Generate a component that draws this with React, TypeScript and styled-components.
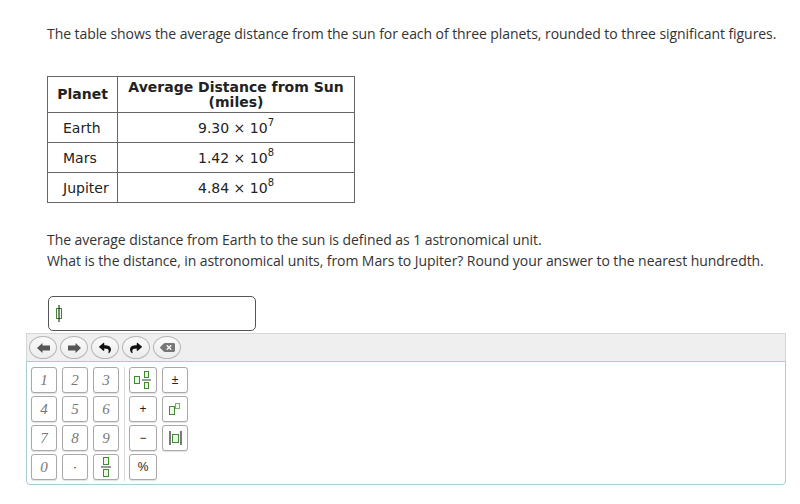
import * as React from 'react'
import styled, { createGlobalStyle } from 'styled-components'
import { FaReply, FaShare, FaBackspace } from 'react-icons/fa'

const GlobalStyle = createGlobalStyle`
    html, body {
        margin: 0;
        padding: 0;
        background: #fff;
    }
    body {
        font-family: "Open Sans", "Liberation Sans", sans-serif;
        color: #333;
    }
`;

const Page = styled.div`
    width: 800px;
    height: 504px;
    padding: 23px 0 0 26px;
    box-sizing: border-box;
    overflow: hidden;
`;

const Text = styled.p<{ $top: number }>`
    margin: ${p => p.$top}px 0 0 21px;
    font-size: 14px;
    line-height: 21px;
    color: #333;
    letter-spacing: -0.07px;
`;

const Table = styled.table`
    margin: 32px 0 0 21px;
    border-collapse: collapse;
    font-family: "DejaVu Sans", Verdana, sans-serif;
    font-size: 14px;
    color: #222;
    border: 1px solid #666;
`;

const Th = styled.th<{ $w: number }>`
    width: ${p => p.$w}px;
    height: 36px;
    padding: 0 4px;
    box-sizing: border-box;
    border: 1px solid #666;
    font-weight: bold;
    line-height: 15px;
    text-align: center;
`;

const Td = styled.td<{ $align?: 'left' | 'center' }>`
    height: 29px;
    padding: ${p => p.$align === 'left' ? '0 2px 0 15px' : '0 2px'};
    border: 1px solid #666;
    text-align: ${p => p.$align ?? 'center'};
    line-height: 16px;

    sup {
        font-size: 10px;
        line-height: 0;
        vertical-align: 7px;
    }
`;

const Answer = styled.div`
    margin: 25px 0 0 22px;
    width: 208px;
    height: 35px;
    box-sizing: border-box;
    border: 1px solid #555;
    border-radius: 5px;
    display: flex;
    align-items: center;
    padding-left: 6px;
`;

const Keypad = styled.div`
    margin-top: 2px;
    width: 760px;
`;

const Toolbar = styled.div`
    height: 28px;
    box-sizing: border-box;
    background: #efefef;
    border: 1px solid #d6d6d6;
    border-bottom: none;
    display: flex;
    align-items: center;
    gap: 3px;
    padding-left: 2px;
`;

const RoundButton = styled.div<{ $color: string }>`
    width: 28px;
    height: 23px;
    box-sizing: border-box;
    border: 1px solid #b4b4b4;
    border-radius: 50%;
    background: linear-gradient(#fbfbfb, #ececec);
    display: flex;
    align-items: center;
    justify-content: center;
    color: ${p => p.$color};
    font-size: 12px;
`;

const Panel = styled.div`
    height: 124px;
    box-sizing: border-box;
    border: 1px solid #a8cdd5;
    border-radius: 0 0 4px 4px;
    padding: 5px 0 0 4px;
    display: flex;
`;

const KeyGrid = styled.div<{ $cols: string }>`
    display: grid;
    grid-template-columns: ${p => p.$cols};
    grid-auto-rows: 26px;
    column-gap: 5px;
    row-gap: 3px;
`;

const Divider = styled.div`
    width: 1px;
    height: 114px;
    margin: 0 4px 0 5px;
    background: #d8d8d8;
`;

const Key = styled.div<{ $kind?: 'digit' | 'op' | 'icon' }>`
    box-sizing: border-box;
    border: 1px solid #a9a9a9;
    border-radius: 3px;
    background: #fff;
    box-shadow: 0 1px 1px rgba(0, 0, 0, 0.12);
    display: flex;
    align-items: center;
    justify-content: center;
    font-family: ${p => p.$kind === 'digit' ? '"Liberation Serif", serif' : '"Liberation Sans", sans-serif'};
    font-style: ${p => p.$kind === 'digit' ? 'italic' : 'normal'};
    font-size: ${p => p.$kind === 'digit' ? '15px' : '12px'};
    color: ${p => p.$kind === 'digit' ? '#777' : '#222'};
`;

const Empty = styled.div``;

const G = '#3f8a2f';
const GF = '#eef7ea';

const BlockArrow = ({ flip }: { flip?: boolean }) => (
    <svg width="13" height="10" viewBox="0 0 13 10" style={flip ? { transform: 'scaleX(-1)' } : undefined}>
        <path d="M0 5 L5.5 0 L5.5 2.6 L13 2.6 L13 7.4 L5.5 7.4 L5.5 10 Z" fill="currentColor" />
    </svg>
);

const Cursor = () => (
    <svg width="8" height="18" viewBox="0 0 8 18">
        <rect x="1.5" y="3.5" width="5" height="10" fill={GF} stroke={G} />
        <line x1="4" y1="0" x2="4" y2="17" stroke="#111" strokeWidth="1" />
    </svg>
);

const MixedIcon = () => (
    <svg width="20" height="18" viewBox="0 0 20 18">
        <rect x="1.5" y="5.5" width="5" height="7" fill={GF} stroke={G} />
        <rect x="11.5" y="0.5" width="4" height="6" fill={GF} stroke={G} />
        <line x1="9" y1="9" x2="18" y2="9" stroke="#333" />
        <rect x="11.5" y="11.5" width="4" height="6" fill={GF} stroke={G} />
    </svg>
);

const FracIcon = () => (
    <svg width="12" height="20" viewBox="0 0 12 20">
        <rect x="3.5" y="0.5" width="5" height="7" fill={GF} stroke={G} />
        <line x1="1" y1="10" x2="11" y2="10" stroke="#333" />
        <rect x="3.5" y="12.5" width="5" height="7" fill={GF} stroke={G} />
    </svg>
);

const PowIcon = () => (
    <svg width="12" height="12" viewBox="0 0 12 12">
        <rect x="0.5" y="3.5" width="5" height="8" fill={GF} stroke={G} />
        <rect x="6.5" y="0.5" width="4" height="5" fill={GF} stroke="#7fae74" />
    </svg>
);

const AbsIcon = () => (
    <svg width="13" height="14" viewBox="0 0 13 14">
        <line x1="1" y1="0" x2="1" y2="14" stroke="#222" strokeWidth="1.2" />
        <rect x="3.5" y="3.5" width="6" height="8" fill={GF} stroke={G} />
        <line x1="12" y1="0" x2="12" y2="14" stroke="#222" strokeWidth="1.2" />
    </svg>
);

const rows = [
    { planet: 'Earth', base: '9.30', exp: '7' },
    { planet: 'Mars', base: '1.42', exp: '8' },
    { planet: 'Jupiter', base: '4.84', exp: '8' },
];

export default function App() {
    return (
        <Page>
            <GlobalStyle />
            <Text $top={0}>
                The table shows the average distance from the sun for each of three planets, rounded to three significant figures.
            </Text>

            <Table>
                <thead>
                    <tr>
                        <Th $w={70}>Planet</Th>
                        <Th $w={237}>Average Distance from Sun<br />(miles)</Th>
                    </tr>
                </thead>
                <tbody>
                    {rows.map(r => (
                        <tr key={r.planet}>
                            <Td $align="left">{r.planet}</Td>
                            <Td>{r.base} × 10<sup>{r.exp}</sup></Td>
                        </tr>
                    ))}
                </tbody>
            </Table>

            <Text $top={26}>
                The average distance from Earth to the sun is defined as 1 astronomical unit.<br />
                What is the distance, in astronomical units, from Mars to Jupiter? Round your answer to the nearest hundredth.
            </Text>

            <Answer>
                <Cursor />
            </Answer>

            <Keypad>
                <Toolbar>
                    <RoundButton $color="#555"><BlockArrow /></RoundButton>
                    <RoundButton $color="#555"><BlockArrow flip /></RoundButton>
                    <RoundButton $color="#111"><FaReply /></RoundButton>
                    <RoundButton $color="#111"><FaShare /></RoundButton>
                    <RoundButton $color="#777"><FaBackspace size={15} /></RoundButton>
                </Toolbar>
                <Panel>
                    <KeyGrid $cols="26px 26px 26px">
                        {['1', '2', '3', '4', '5', '6', '7', '8', '9', '0'].map(d => (
                            <React.Fragment key={d}>
                                <Key $kind="digit">{d}</Key>
                                {d === '0' && <Key $kind="op">·</Key>}
                                {d === '0' && <Key $kind="icon"><FracIcon /></Key>}
                            </React.Fragment>
                        ))}
                    </KeyGrid>
                    <Divider />
                    <KeyGrid $cols="28px 26px">
                        <Key $kind="icon"><MixedIcon /></Key>
                        <Key $kind="op">±</Key>
                        <Key $kind="op">+</Key>
                        <Key $kind="icon"><PowIcon /></Key>
                        <Key $kind="op">−</Key>
                        <Key $kind="icon"><AbsIcon /></Key>
                        <Key $kind="op">%</Key>
                        <Empty />
                    </KeyGrid>
                </Panel>
            </Keypad>
        </Page>
    )
}
